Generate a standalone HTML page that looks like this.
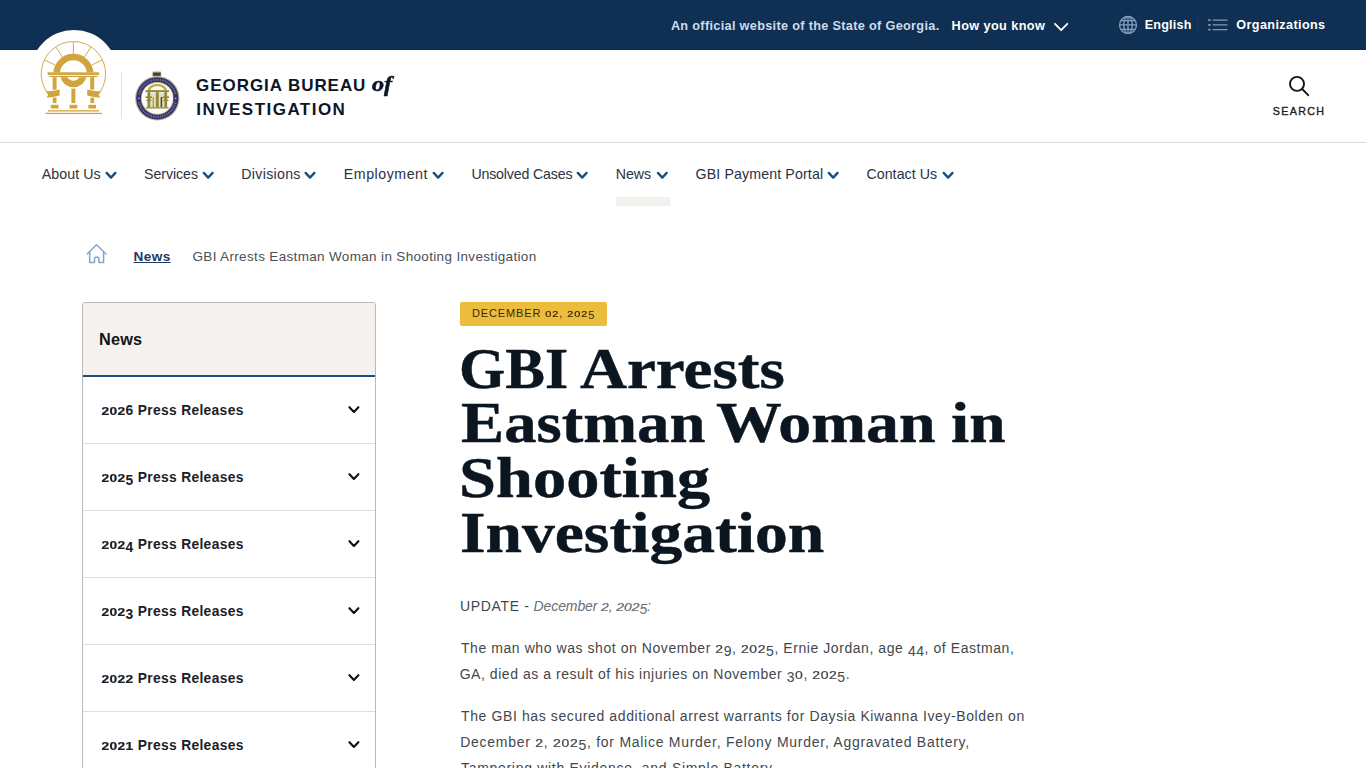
<!DOCTYPE html>
<html lang="en"><head><meta charset="utf-8"><title>GBI Arrests Eastman Woman in Shooting Investigation</title>
<style>
html,body{margin:0;padding:0;background:#fff;}
body{width:1366px;height:768px;position:relative;overflow:hidden;font-family:'Liberation Sans',sans-serif;}
.t{position:absolute;white-space:pre;margin:0;padding:0;}
.b{position:absolute;}
svg{position:absolute;overflow:visible;}
.x{display:inline-block;line-height:1;transform:scaleY(.75);transform-origin:0 .8465em;-webkit-text-stroke:.3px currentColor;}
.d{position:relative;top:.2em;}
</style></head><body>
<!-- top bar -->
<div class="b" style="left:0;top:0;width:1366px;height:50px;background:#0f3052;"></div>
<!-- header bottom rule -->
<div class="b" style="left:0;top:142px;width:1366px;height:1px;background:#dcdcdc;"></div>
<!-- white bump behind state logo -->
<div class="b" style="left:29.5px;top:30px;width:88px;height:88px;border-radius:50%;background:#fff;"></div>

<!-- Georgia state logo (gold arch) -->
<svg style="left:0;top:0" width="140" height="130" viewBox="0 0 140 130">
  <g fill="none" stroke="#cba23e" stroke-width="0.9">
    <path d="M46.6 91.6 A32.2 32.2 0 1 1 100.2 91.6"/>
    <path d="M73.4 41.9V54 M55.86 47L62.34 56.97 M90.94 47L84.46 56.97 M44.46 59.88L55.15 65.1 M102.34 59.88L91.65 65.1"/>
  </g>
  <g fill="#d0a53e">
    <!-- big arch: ring r 20.1/13.4 centred (73.4,73.8) clipped above beam -->
    <path d="M53.36 72.4 A20.1 20.1 0 0 1 93.44 72.4 H86.73 A13.4 13.4 0 0 0 60.07 72.4Z"/>
    <!-- beam -->
    <rect x="47.6" y="72.3" width="51.6" height="2.6"/>
    <rect x="49.2" y="75.8" width="48.4" height="1.3"/>
    <!-- lower U: ring r 13.4/6.8 centred (73.4,73.9) below beam -->
    <path d="M60.42 77.2 A13.4 13.4 0 0 0 86.38 77.2 H79.32 A6.8 6.8 0 0 1 67.48 77.2Z"/>
    <!-- columns -->
    <rect x="52.6" y="77.2" width="4" height="12.4"/>
    <rect x="90.2" y="77.2" width="4" height="12.4"/>
    <rect x="52.8" y="97.6" width="3.7" height="5.5"/>
    <rect x="90.4" y="97.6" width="3.7" height="5.5"/>
    <rect x="71.4" y="88.6" width="4" height="14.5"/>
    <!-- bases -->
    <rect x="50.8" y="104.8" width="7.7" height="3.7"/>
    <rect x="69.5" y="104.8" width="7.8" height="3.7"/>
    <rect x="88.3" y="104.8" width="7.7" height="3.7"/>
    <!-- steps -->
    <rect x="48" y="110.2" width="51" height="1.3"/>
    <rect x="45.5" y="112.8" width="56.5" height="1.3"/>
    <!-- banners -->
    <path d="M45.4 91.6 Q52 91.4 59.6 89.4 L59.6 95.4 Q53 97.4 46.6 97.8 L48.2 94.6Z"/>
    <path d="M101.4 91.6 Q94.8 91.4 87.2 89.4 L87.2 95.4 Q93.8 97.4 100.2 97.8 L98.6 94.6Z"/>
  </g>
</svg>

<!-- divider between logos -->
<div class="b" style="left:121px;top:72px;width:1px;height:47px;background:#e1e1e1;"></div>

<!-- GBI seal -->
<svg style="left:0;top:0;filter:blur(0.35px)" width="200" height="130" viewBox="0 0 200 130">
  <rect x="152.4" y="71.4" width="8.8" height="5.4" rx="1" fill="#b9a77c"/>
  <rect x="153" y="72.7" width="7.6" height="3" fill="#3d3a4a"/>
  <circle cx="157.3" cy="98.3" r="22.2" fill="#c4b48c"/>
  <circle cx="157.3" cy="98.3" r="21.1" fill="#2e3072"/>
  <circle cx="157.3" cy="98.3" r="18.6" fill="none" stroke="#8f8a86" stroke-width="2.2" stroke-dasharray="1.2 1.1" opacity="0.75"/>
  <circle cx="157.3" cy="98.3" r="16.4" fill="#c4b48c"/>
  <circle cx="157.3" cy="98.3" r="15.6" fill="#fdfcf6"/>
  <!-- stars left/right: cover text speckles -->
  <rect x="137" y="95" width="4" height="6.6" fill="#2e3072"/>
  <rect x="173.6" y="95" width="4" height="6.6" fill="#2e3072"/>
  <circle cx="139" cy="98.3" r="0.9" fill="#a9acc9"/>
  <circle cx="175.6" cy="98.3" r="0.9" fill="#a9acc9"/>
  <g fill="#c3ae55">
    <path d="M147.6 90.4 A9.7 6.6 0 0 1 167 90.4 H164.2 A6.9 4.2 0 0 0 150.4 90.4Z"/>
  </g>
  <rect x="147" y="93" width="20.6" height="14" fill="#c9bd7a" opacity=".45"/>
  <g fill="#8e8838">
    <rect x="145.6" y="90.2" width="23.4" height="1.9"/>
    <rect x="146" y="107.2" width="22.6" height="1.3"/>
    <rect x="147.6" y="92.1" width="2.6" height="15.1"/>
    <rect x="155.9" y="92.1" width="2.8" height="15.1"/>
    <rect x="164.4" y="92.1" width="2.6" height="15.1"/>
    <rect x="145.6" y="96.4" width="6.4" height="1.6"/>
    <rect x="162.6" y="96.4" width="6.4" height="1.6"/>
    <rect x="146.4" y="99.6" width="5" height="1.3"/>
    <rect x="163.4" y="99.6" width="5" height="1.3"/>
  </g>
  <rect x="160.6" y="97" width="1.6" height="10" fill="#4b4a3a"/>
  <rect x="152.6" y="97" width="1.4" height="10" fill="#a9a45a"/>
</svg>

<!-- search icon -->
<svg style="left:0;top:0" width="1366" height="140" viewBox="0 0 1366 140">
  <g fill="none" stroke="#151515" stroke-width="1.9" stroke-linecap="round">
    <circle cx="1297" cy="83.9" r="7"/>
    <path d="M1302.2 89 L1308.2 95.2"/>
  </g>
</svg>

<!-- topbar icons -->
<svg style="left:0;top:0" width="1366" height="50" viewBox="0 0 1366 50">
  <path d="M1055 23.8 L1061.15 30.1 L1067.3 23.8" fill="none" stroke="#fff" stroke-width="1.8" stroke-linecap="round" stroke-linejoin="round"/>
  <g fill="none" stroke="#86a0bf" stroke-width="1.3">
    <circle cx="1128" cy="24.95" r="8.45"/>
    <ellipse cx="1128" cy="24.95" rx="4.3" ry="8.45"/>
    <path d="M1128 16.5V33.4 M1119.6 24.95H1136.4 M1120.8 20.6H1135.2 M1120.8 29.3H1135.2"/>
  </g>
  <g stroke="#8499b6" stroke-width="1.4" fill="none">
    <path d="M1212.7 20.1H1227.4 M1212.7 24.85H1227.4 M1212.7 29.6H1227.4"/>
    <path d="M1208.2 20.1H1210.6 M1208.2 24.85H1210.6 M1208.2 29.6H1210.6" stroke-width="1.9"/>
  </g>
  <rect x="1197.5" y="16" width="1" height="18" fill="#1a3860"/>
</svg>

<!-- nav chevrons + active underline -->
<svg style="left:0;top:140px" width="1366" height="80" viewBox="0 140 1366 80">
  <g fill="none" stroke="#1a4c7c" stroke-width="2.3" stroke-linecap="round" stroke-linejoin="round">
    <path d="M106.6 172.9 l4.4 4.7 l4.4 -4.7"/>
    <path d="M203.8 172.9 l4.4 4.7 l4.4 -4.7"/>
    <path d="M305.6 172.9 l4.4 4.7 l4.4 -4.7"/>
    <path d="M433.7 172.9 l4.4 4.7 l4.4 -4.7"/>
    <path d="M577.8 172.9 l4.4 4.7 l4.4 -4.7"/>
    <path d="M657.9 172.9 l4.4 4.7 l4.4 -4.7"/>
    <path d="M828.8 172.9 l4.4 4.7 l4.4 -4.7"/>
    <path d="M943.7 172.9 l4.4 4.7 l4.4 -4.7"/>
  </g>
  <rect x="616" y="197" width="54.3" height="8.8" fill="#f2f1ee"/>
</svg>

<!-- breadcrumb home icon -->
<svg style="left:0;top:230px" width="200" height="60" viewBox="0 230 200 60">
  <g fill="none" stroke="#84a6cc" stroke-width="1.5" stroke-linejoin="round" stroke-linecap="round">
    <path d="M87.2 254 L96.6 244.8 L106 254"/>
    <path d="M89.7 252.2 V262.6 H94.5 V258 Q94.5 257.2 95.3 257.2 H98.1 Q98.9 257.2 98.9 258 V262.6 H103.6 V252.2"/>
  </g>
</svg>

<!-- sidebar -->
<div class="b" style="left:82px;top:302px;width:292px;height:480px;border:1px solid #b9b9b9;border-radius:3px;background:#fff;overflow:hidden;">
  <div style="height:72px;background:#f5f1ee;border-bottom:2px solid #1b4f80;"></div>
  <div style="height:66px;border-bottom:1px solid #dedede;"></div>
  <div style="height:66px;border-bottom:1px solid #dedede;"></div>
  <div style="height:66px;border-bottom:1px solid #dedede;"></div>
  <div style="height:66px;border-bottom:1px solid #dedede;"></div>
  <div style="height:66px;border-bottom:1px solid #dedede;"></div>
</div>
<svg style="left:0;top:380px" width="400" height="388" viewBox="0 380 400 388">
  <g fill="none" stroke="#111" stroke-width="2.1" stroke-linecap="round" stroke-linejoin="round">
    <path d="M349.4 407.2 l4.5 4.8 l4.5 -4.8"/>
    <path d="M349.4 474.2 l4.5 4.8 l4.5 -4.8"/>
    <path d="M349.4 541.2 l4.5 4.8 l4.5 -4.8"/>
    <path d="M349.4 608.2 l4.5 4.8 l4.5 -4.8"/>
    <path d="M349.4 675.2 l4.5 4.8 l4.5 -4.8"/>
    <path d="M349.4 742.2 l4.5 4.8 l4.5 -4.8"/>
  </g>
</svg>

<!-- date badge -->
<div class="b" style="left:460px;top:302px;width:147px;height:23.6px;background:#ecbc3c;border-radius:2px;"></div>

<span class="t" style="left:670.90px;top:18.90px;font:normal 700 12.7px/15px 'Liberation Sans',sans-serif;letter-spacing:0.321px;color:#cfdbea;">An official website of the State of Georgia.</span>
<span class="t" style="left:951.60px;top:18.80px;font:normal 700 12.7px/15px 'Liberation Sans',sans-serif;letter-spacing:0.400px;color:#ffffff;">How you know</span>
<span class="t" style="left:1144.70px;top:17.60px;font:normal 700 12.6px/15px 'Liberation Sans',sans-serif;letter-spacing:0.200px;color:#ffffff;">English</span>
<span class="t" style="left:1236.30px;top:17.60px;font:normal 700 12.6px/15px 'Liberation Sans',sans-serif;letter-spacing:0.400px;color:#ffffff;">Organizations</span>
<span class="t" style="left:196.10px;top:75.80px;font:normal 700 17.0px/20px 'Liberation Sans',sans-serif;letter-spacing:0.938px;color:#0b1628;">GEORGIA BUREAU</span>
<span class="t" style="left:372.30px;top:71.60px;font:italic 700 20.5px/25px 'Liberation Serif',serif;transform:scaleX(1.1790);transform-origin:0 0;color:#0b1628;-webkit-text-stroke:0.5px #0b1628;">of</span>
<span class="t" style="left:196.30px;top:99.70px;font:normal 700 17.0px/20px 'Liberation Sans',sans-serif;letter-spacing:1.467px;color:#0b1628;">INVESTIGATION</span>
<span class="t" style="left:1272.70px;top:104.70px;font:normal 400 10.7px/13px 'Liberation Sans',sans-serif;letter-spacing:1.360px;color:#1c1c1c;-webkit-text-stroke:0.35px #1c1c1c;">SEARCH</span>
<span class="t" style="left:41.70px;top:166.00px;font:normal 400 14.2px/17px 'Liberation Sans',sans-serif;letter-spacing:0.086px;color:#2a333f;">About Us</span>
<span class="t" style="left:144.00px;top:166.00px;font:normal 400 14.2px/17px 'Liberation Sans',sans-serif;letter-spacing:-0.057px;color:#2a333f;">Services</span>
<span class="t" style="left:241.30px;top:166.00px;font:normal 400 14.2px/17px 'Liberation Sans',sans-serif;letter-spacing:0.300px;color:#2a333f;">Divisions</span>
<span class="t" style="left:343.80px;top:166.00px;font:normal 400 14.2px/17px 'Liberation Sans',sans-serif;letter-spacing:0.533px;color:#2a333f;">Employment</span>
<span class="t" style="left:471.40px;top:166.00px;font:normal 400 14.2px/17px 'Liberation Sans',sans-serif;letter-spacing:-0.169px;color:#2a333f;">Unsolved Cases</span>
<span class="t" style="left:615.70px;top:166.00px;font:normal 400 14.2px/17px 'Liberation Sans',sans-serif;color:#2a333f;">News</span>
<span class="t" style="left:695.50px;top:166.00px;font:normal 400 14.2px/17px 'Liberation Sans',sans-serif;letter-spacing:0.129px;color:#2a333f;">GBI Payment Portal</span>
<span class="t" style="left:866.40px;top:166.00px;font:normal 400 14.2px/17px 'Liberation Sans',sans-serif;letter-spacing:0.067px;color:#2a333f;">Contact Us</span>
<span class="t" style="left:133.50px;top:248.70px;font:normal 700 13.6px/16px 'Liberation Sans',sans-serif;letter-spacing:0.400px;color:#1c3a5e;text-decoration:underline;text-decoration-thickness:1px;text-underline-offset:0.6px;">News</span>
<span class="t" style="left:192.50px;top:248.70px;font:normal 400 13.5px/16px 'Liberation Sans',sans-serif;letter-spacing:0.336px;color:#4a4f55;">GBI Arrests Eastman Woman in Shooting Investigation</span>
<span class="t" style="left:99.00px;top:329.10px;font:normal 700 16.3px/20px 'Liberation Sans',sans-serif;letter-spacing:0.200px;color:#151515;">News</span>
<span class="t" style="left:101.50px;top:401.80px;font:normal 700 13.8px/17px 'Liberation Sans',sans-serif;letter-spacing:0.333px;color:#1a2029;"><span class="x">2</span><span class="x">0</span><span class="x">2</span>6 Press Releases</span>
<span class="t" style="left:101.50px;top:468.80px;font:normal 700 13.8px/17px 'Liberation Sans',sans-serif;letter-spacing:0.333px;color:#1a2029;"><span class="x">2</span><span class="x">0</span><span class="x">2</span><span class="d">5</span> Press Releases</span>
<span class="t" style="left:101.50px;top:535.80px;font:normal 700 13.8px/17px 'Liberation Sans',sans-serif;letter-spacing:0.333px;color:#1a2029;"><span class="x">2</span><span class="x">0</span><span class="x">2</span><span class="d">4</span> Press Releases</span>
<span class="t" style="left:101.50px;top:602.80px;font:normal 700 13.8px/17px 'Liberation Sans',sans-serif;letter-spacing:0.333px;color:#1a2029;"><span class="x">2</span><span class="x">0</span><span class="x">2</span><span class="d">3</span> Press Releases</span>
<span class="t" style="left:101.50px;top:669.80px;font:normal 700 13.8px/17px 'Liberation Sans',sans-serif;letter-spacing:0.333px;color:#1a2029;"><span class="x">2</span><span class="x">0</span><span class="x">2</span><span class="x">2</span> Press Releases</span>
<span class="t" style="left:101.50px;top:736.80px;font:normal 700 13.8px/17px 'Liberation Sans',sans-serif;letter-spacing:0.333px;color:#1a2029;"><span class="x">2</span><span class="x">0</span><span class="x">2</span><span class="x">1</span> Press Releases</span>
<span class="t" style="left:472.00px;top:306.70px;font:normal 400 11.0px/13px 'Liberation Sans',sans-serif;letter-spacing:0.875px;color:#3b2a07;">DECEMBER <span class="x">0</span><span class="x">2</span>, <span class="x">2</span><span class="x">0</span><span class="x">2</span><span class="d">5</span></span>
<span class="t" style="left:459.30px;top:334.60px;font:normal 700 57px/68px 'Liberation Serif',serif;transform:scaleX(1.0440);transform-origin:0 0;color:#0b1620;-webkit-text-stroke:0.45px #0b1620;">GBI</span>
<span class="t" style="left:580.00px;top:334.60px;font:normal 700 57px/68px 'Liberation Serif',serif;transform:scaleX(1.1412);transform-origin:0 0;color:#0b1620;-webkit-text-stroke:0.45px #0b1620;">Arrests</span>
<span class="t" style="left:461.40px;top:389.30px;font:normal 700 57px/68px 'Liberation Serif',serif;transform:scaleX(1.1346);transform-origin:0 0;color:#0b1620;-webkit-text-stroke:0.45px #0b1620;">Eastman</span>
<span class="t" style="left:716.40px;top:389.30px;font:normal 700 57px/68px 'Liberation Serif',serif;transform:scaleX(1.1553);transform-origin:0 0;color:#0b1620;-webkit-text-stroke:0.45px #0b1620;">Woman</span>
<span class="t" style="left:951.30px;top:389.30px;font:normal 700 57px/68px 'Liberation Serif',serif;transform:scaleX(1.1478);transform-origin:0 0;color:#0b1620;-webkit-text-stroke:0.45px #0b1620;">in</span>
<span class="t" style="left:458.60px;top:443.90px;font:normal 700 57px/68px 'Liberation Serif',serif;transform:scaleX(1.1660);transform-origin:0 0;color:#0b1620;-webkit-text-stroke:0.45px #0b1620;">Shooting</span>
<span class="t" style="left:460.30px;top:498.60px;font:normal 700 57px/68px 'Liberation Serif',serif;transform:scaleX(1.1503);transform-origin:0 0;color:#0b1620;-webkit-text-stroke:0.45px #0b1620;">Investigation</span>
<span class="t" style="left:460.10px;top:598.10px;font:normal 400 14.0px/17px 'Liberation Sans',sans-serif;letter-spacing:0.629px;color:#43474d;">UPDATE -</span>
<span class="t" style="left:533.60px;top:598.10px;font:italic 400 14.0px/17px 'Liberation Sans',sans-serif;letter-spacing:-0.112px;color:#6b6e73;">December <span class="x">2</span>, <span class="x">2</span><span class="x">0</span><span class="x">2</span><span class="d">5</span>:</span>
<span class="t" style="left:461.00px;top:640.00px;font:normal 400 14.0px/17px 'Liberation Sans',sans-serif;letter-spacing:0.563px;color:#43474d;">The man who was shot on November <span class="x">2</span><span class="d">9</span>, <span class="x">2</span><span class="x">0</span><span class="x">2</span><span class="d">5</span>, Ernie Jordan, age <span class="d">4</span><span class="d">4</span>, of Eastman,</span>
<span class="t" style="left:459.70px;top:666.00px;font:normal 400 14.0px/17px 'Liberation Sans',sans-serif;letter-spacing:0.544px;color:#43474d;">GA, died as a result of his injuries on November <span class="d">3</span><span class="x">0</span>, <span class="x">2</span><span class="x">0</span><span class="x">2</span><span class="d">5</span>.</span>
<span class="t" style="left:461.00px;top:708.00px;font:normal 400 14.0px/17px 'Liberation Sans',sans-serif;letter-spacing:0.608px;color:#43474d;">The GBI has secured additional arrest warrants for Daysia Kiwanna Ivey-Bolden on</span>
<span class="t" style="left:460.20px;top:734.00px;font:normal 400 14.0px/17px 'Liberation Sans',sans-serif;letter-spacing:0.726px;color:#43474d;">December <span class="x">2</span>, <span class="x">2</span><span class="x">0</span><span class="x">2</span><span class="d">5</span>, for Malice Murder, Felony Murder, Aggravated Battery,</span>
<span class="t" style="left:461.00px;top:760.00px;font:normal 400 14.0px/17px 'Liberation Sans',sans-serif;letter-spacing:0.698px;color:#43474d;">Tampering with Evidence, and Simple Battery.</span>
</body></html>
